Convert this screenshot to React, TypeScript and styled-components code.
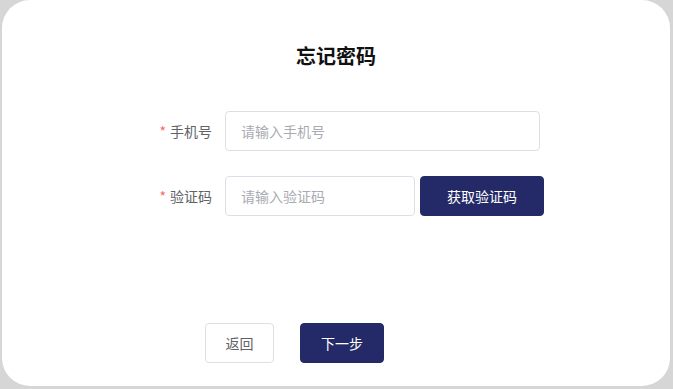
import styled, { createGlobalStyle } from "styled-components";

const GlobalStyle = createGlobalStyle`
  html, body {
    margin: 0;
    padding: 0;
    background: #d6d6d6;
    font-family: "Noto Sans CJK SC", "Noto Sans", sans-serif;
  }
`;

const Card = styled.div`
  box-sizing: border-box;
  height: 386px;
  margin: 0 3px 0 2px;
  background: #ffffff;
  border-radius: 28px;
  padding-top: 42px;
  display: flex;
  flex-direction: column;
  align-items: center;
`;

const Title = styled.h1`
  margin: 0;
  font-size: 20px;
  line-height: 28px;
  font-weight: 700;
  color: #111;
`;

const Form = styled.form`
  width: 420px;
  margin-top: 41px;
  display: flex;
  flex-direction: column;
  gap: 25px;
`;

const Row = styled.div`
  display: flex;
  align-items: center;
  height: 40px;
`;

const Label = styled.label`
  box-sizing: border-box;
  width: 99px;
  padding-right: 13px;
  text-align: right;
  font-size: 14px;
  color: #606266;
`;

const Star = styled.span`
  color: #f56c6c;
  margin-right: 4px;
`;

const Input = styled.input<{ $w: number }>`
  box-sizing: border-box;
  width: ${(p) => p.$w}px;
  height: 40px;
  border: 1px solid #dcdfe6;
  border-radius: 4px;
  padding: 0 15px;
  font-family: inherit;
  font-size: 14px;
  color: #606266;
  outline: none;

  &::placeholder {
    color: #a8abb2;
  }
`;

const Button = styled.button<{ $primary?: boolean; $w: number }>`
  box-sizing: border-box;
  width: ${(p) => p.$w}px;
  height: 40px;
  border-radius: 4px;
  font-family: inherit;
  font-size: 14px;
  cursor: pointer;
  border: 1px solid ${(p) => (p.$primary ? "#242a67" : "#dcdfe6")};
  background: ${(p) => (p.$primary ? "#242a67" : "#ffffff")};
  color: ${(p) => (p.$primary ? "#ffffff" : "#606266")};
`;

const CodeButton = styled(Button)`
  margin-left: 5px;
`;

const Actions = styled.div`
  display: flex;
  gap: 26px;
  margin-top: 82px;
  padding-left: 79px;
`;

export default function App() {
  return (
    <>
      <GlobalStyle />
      <Card>
        <Title>忘记密码</Title>
        <Form onSubmit={(e) => e.preventDefault()}>
          <Row>
            <Label>
              <Star>*</Star>手机号
            </Label>
            <Input $w={315} placeholder="请输入手机号" />
          </Row>
          <Row>
            <Label>
              <Star>*</Star>验证码
            </Label>
            <Input $w={190} placeholder="请输入验证码" />
            <CodeButton type="button" $primary $w={124}>
              获取验证码
            </CodeButton>
          </Row>
          <Actions>
            <Button type="button" $w={69}>
              返回
            </Button>
            <Button type="submit" $primary $w={84}>
              下一步
            </Button>
          </Actions>
        </Form>
      </Card>
    </>
  );
}
